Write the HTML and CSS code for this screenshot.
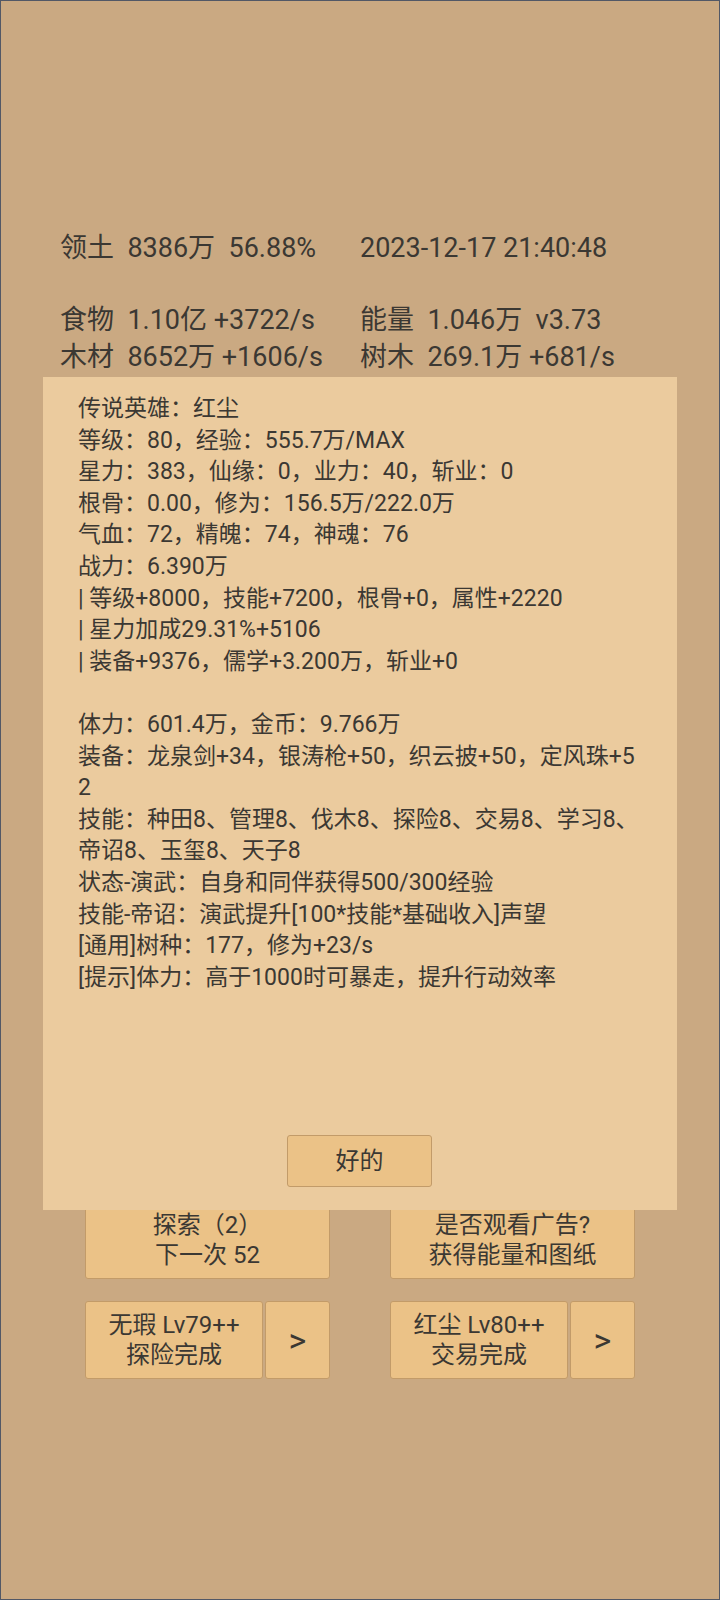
FILE: index.html
```html
<!DOCTYPE html>
<html>
<head>
    <title>领土</title>
    <link rel="stylesheet" href="styles.css">
</head>
<body>
    <div class="screen">
        <div class="head-row">
            <div>领土  8386万  56.88%</div>
            <div>2023-12-17 21:40:48</div>
        </div>
        <div class="stats">
            <div>食物  1.10亿 +3722/s</div>
            <div>能量  1.046万  v3.73</div>
            <div>木材  8652万 +1606/s</div>
            <div>树木  269.1万 +681/s</div>
        </div>

        <div class="actions">
            <button class="btn big">探索（2）<br>下一次 52</button>
            <button class="btn big">是否观看广告?<br>获得能量和图纸</button>
            <div class="pair">
                <button class="btn hero">无瑕 Lv79++<br>探险完成</button>
                <button class="btn arrow">&gt;</button>
            </div>
            <div class="pair">
                <button class="btn hero">红尘 Lv80++<br>交易完成</button>
                <button class="btn arrow">&gt;</button>
            </div>
        </div>

        <div class="dialog">
            <div class="info">传说英雄：红尘
等级：80，经验：555.7万/MAX
星力：383，仙缘：0，业力：40，斩业：0
根骨：0.00，修为：156.5万/222.0万
气血：72，精魄：74，神魂：76
战力：6.390万
| 等级+8000，技能+7200，根骨+0，属性+2220
| 星力加成29.31%+5106
| 装备+9376，儒学+3.200万，斩业+0

体力：601.4万，金币：9.766万
装备：龙泉剑+34，银涛枪+50，织云披+50，定风珠+52
技能：种田8、管理8、伐木8、探险8、交易8、学习8、帝诏8、玉玺8、天子8
状态-演武：自身和同伴获得500/300经验
技能-帝诏：演武提升[100*技能*基础收入]声望
[通用]树种：177，修为+23/s
[提示]体力：高于1000时可暴走，提升行动效率</div>
            <button class="btn ok">好的</button>
        </div>
    </div>
</body>
</html>
```

FILE: styles.css
```css
body {
    margin: 0;
    font-family: Roboto, "Noto Sans CJK SC", sans-serif;
    color: #3b3833;
}
.screen {
    position: relative;
    width: 720px;
    height: 1600px;
    box-sizing: border-box;
    border: 1px solid #525866;
    background-color: #caa982;
    padding-top: 229px;
}
.head-row, .stats {
    display: grid;
    grid-template-columns: 300px 300px;
    padding-left: 59px;
    font-size: 27px;
    line-height: 37px;
    white-space: pre;
}
.head-row {
    margin-bottom: 35px;
}
.actions {
    display: grid;
    grid-template-columns: 245px 245px;
    column-gap: 60px;
    row-gap: 22px;
    padding-left: 84px;
    margin-top: 824px;
}
.btn {
    font-family: inherit;
    color: inherit;
    background-color: #ebc287;
    border: 1px solid #c29b69;
    border-radius: 3px;
    padding: 0;
    font-size: 24px;
    line-height: 30px;
    cursor: pointer;
}
.big {
    height: 79px;
}
.pair {
    display: flex;
    gap: 2px;
    height: 78px;
}
.hero {
    width: 178px;
}
.arrow {
    width: 65px;
    font-size: 34px;
}
.dialog {
    position: absolute;
    left: 42px;
    top: 376px;
    width: 634px;
    height: 833px;
    box-sizing: border-box;
    padding: 16px 36px 23px 35px;
    background-color: #ebcb9e;
    display: flex;
    flex-direction: column;
}
.info {
    font-size: 23px;
    line-height: 31.6px;
    white-space: pre-wrap;
    word-break: break-all;
}
.ok {
    margin: auto auto 0;
    width: 145px;
    height: 52px;
}
```
